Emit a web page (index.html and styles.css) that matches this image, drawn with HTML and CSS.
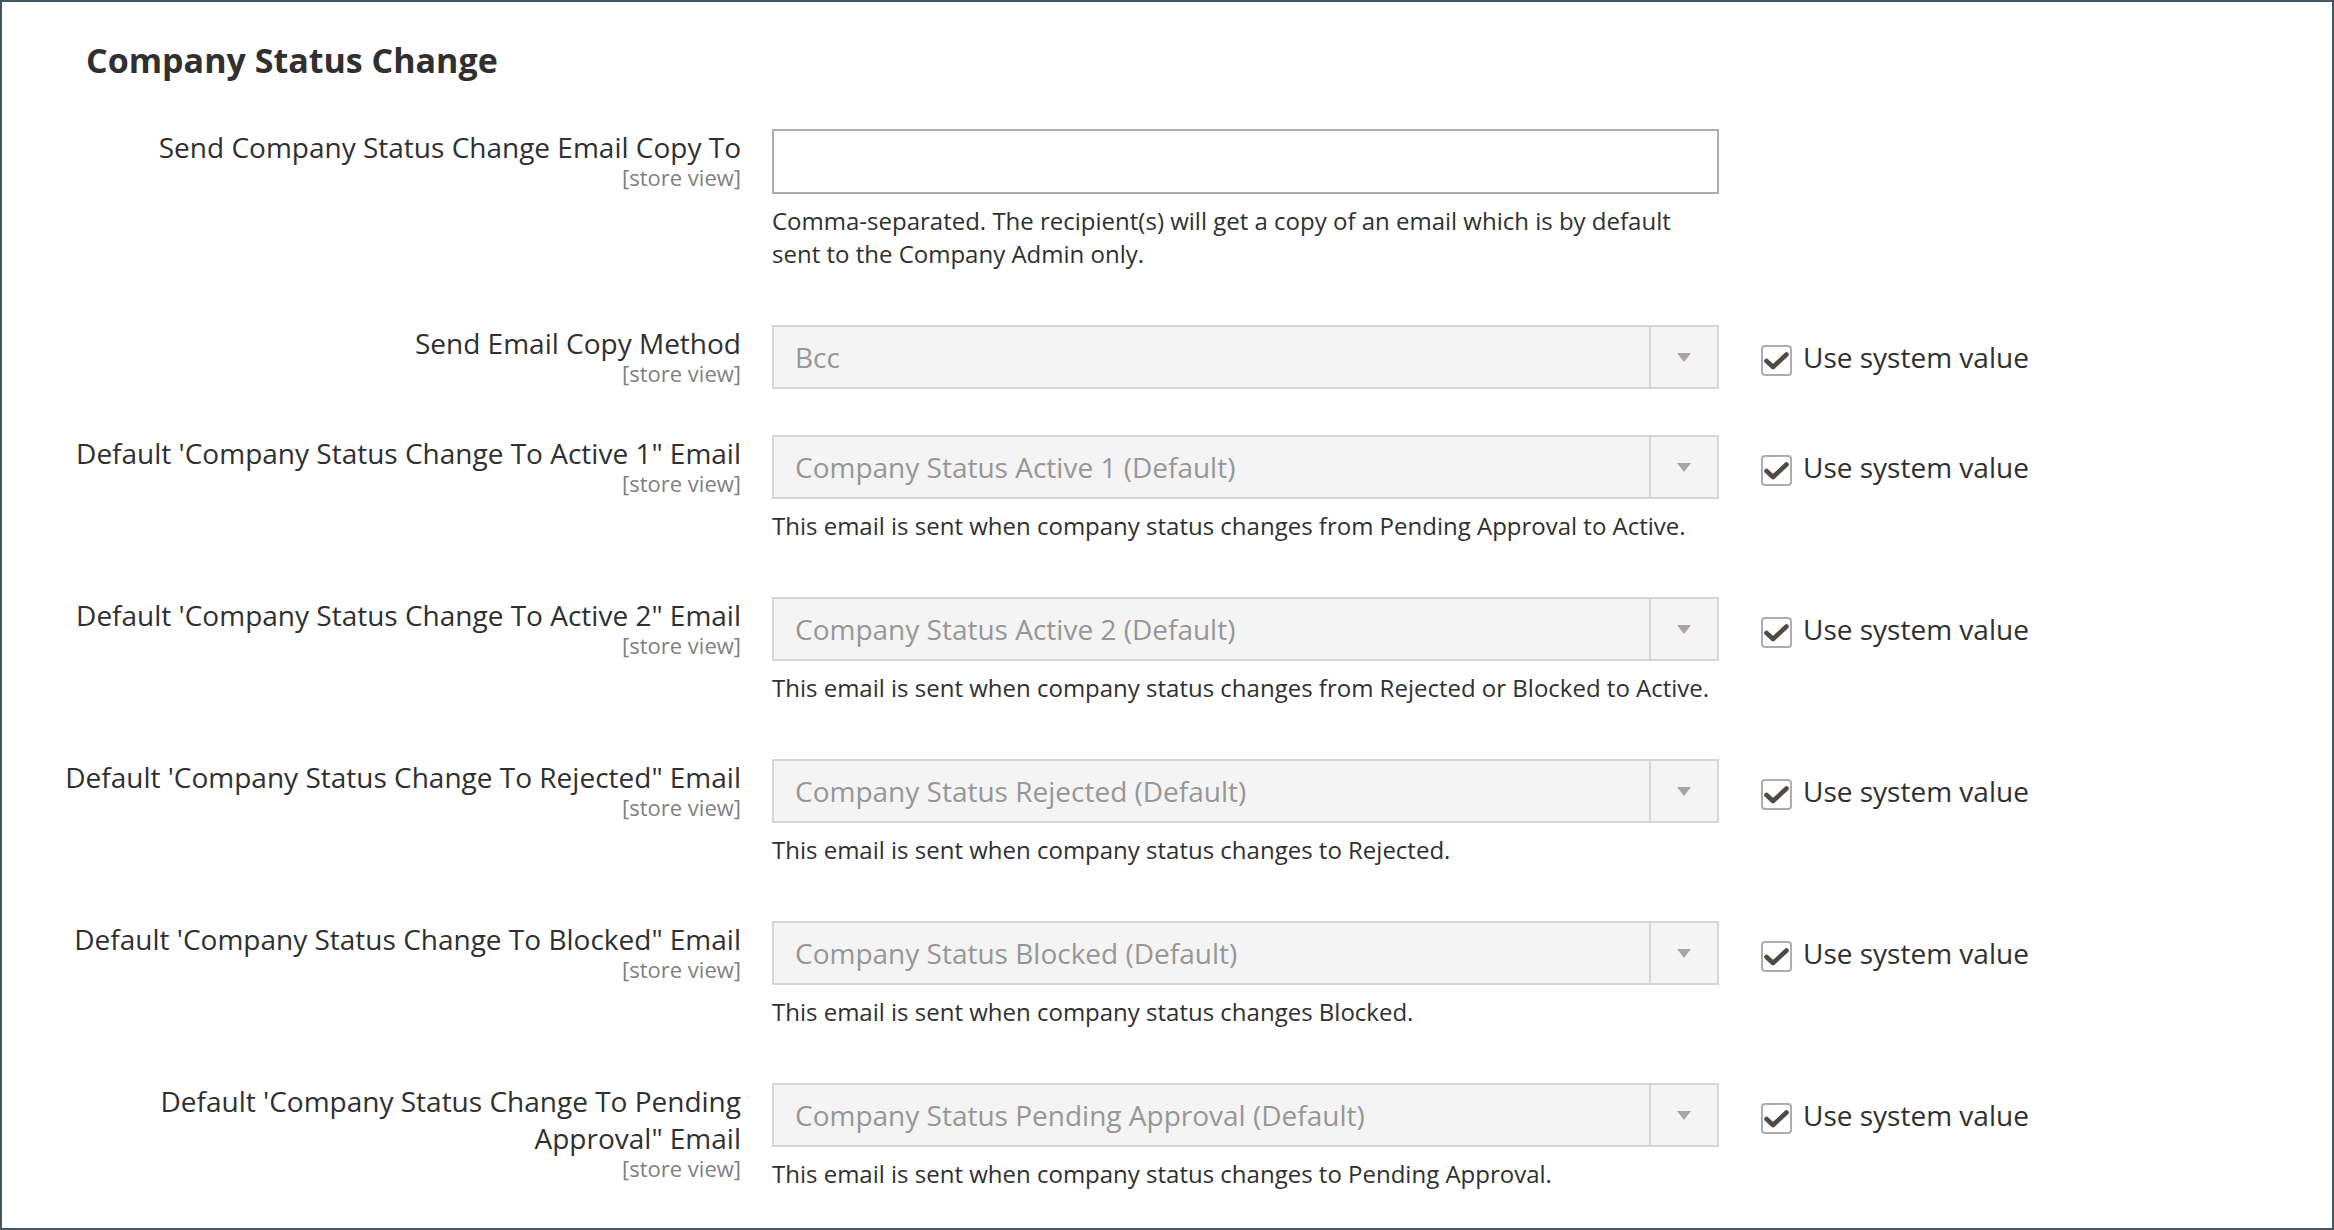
FILE: index.html
```html
<!DOCTYPE html>
<html lang="en">
<head>
<meta charset="utf-8">
<title>Company Status Change</title>
<link rel="stylesheet" href="styles.css">
</head>
<body>
<div class="frame">
  <h2 class="title">Company Status Change</h2>
  <div class="rows">
    <div class="row">
      <div class="label"><span class="label-text">Send Company Status Change Email Copy To</span><span class="scope">[store view]</span></div>
      <div class="control">
        <div class="input"></div>
        <p class="note">Comma-separated. The recipient(s) will get a copy of an email which is by default sent to the Company Admin only.</p>
      </div>
      <div class="extra"></div>
    </div>

    <div class="row row-plain">
      <div class="label"><span class="label-text">Send Email Copy Method</span><span class="scope">[store view]</span></div>
      <div class="control">
        <div class="select"><span class="select-value">Bcc</span><span class="select-btn"><span class="arrow"></span></span></div>
      </div>
      <div class="extra"><span class="checkbox"><svg viewBox="0 0 27 27" width="27" height="27"><polyline points="3.5,14 10,20 23.5,7.5" fill="none" stroke="#514943" stroke-width="4.6" stroke-linecap="round" stroke-linejoin="round"/></svg></span><span class="use-system">Use system value</span></div>
    </div>

    <div class="row">
      <div class="label"><span class="label-text">Default 'Company Status Change To Active 1" Email</span><span class="scope">[store view]</span></div>
      <div class="control">
        <div class="select"><span class="select-value">Company Status Active 1 (Default)</span><span class="select-btn"><span class="arrow"></span></span></div>
        <p class="note">This email is sent when company status changes from Pending Approval to Active.</p>
      </div>
      <div class="extra"><span class="checkbox"><svg viewBox="0 0 27 27" width="27" height="27"><polyline points="3.5,14 10,20 23.5,7.5" fill="none" stroke="#514943" stroke-width="4.6" stroke-linecap="round" stroke-linejoin="round"/></svg></span><span class="use-system">Use system value</span></div>
    </div>

    <div class="row">
      <div class="label"><span class="label-text">Default 'Company Status Change To Active 2" Email</span><span class="scope">[store view]</span></div>
      <div class="control">
        <div class="select"><span class="select-value">Company Status Active 2 (Default)</span><span class="select-btn"><span class="arrow"></span></span></div>
        <p class="note">This email is sent when company status changes from Rejected or Blocked to Active.</p>
      </div>
      <div class="extra"><span class="checkbox"><svg viewBox="0 0 27 27" width="27" height="27"><polyline points="3.5,14 10,20 23.5,7.5" fill="none" stroke="#514943" stroke-width="4.6" stroke-linecap="round" stroke-linejoin="round"/></svg></span><span class="use-system">Use system value</span></div>
    </div>

    <div class="row">
      <div class="label"><span class="label-text">Default 'Company Status Change To Rejected" Email</span><span class="scope">[store view]</span></div>
      <div class="control">
        <div class="select"><span class="select-value">Company Status Rejected (Default)</span><span class="select-btn"><span class="arrow"></span></span></div>
        <p class="note">This email is sent when company status changes to Rejected.</p>
      </div>
      <div class="extra"><span class="checkbox"><svg viewBox="0 0 27 27" width="27" height="27"><polyline points="3.5,14 10,20 23.5,7.5" fill="none" stroke="#514943" stroke-width="4.6" stroke-linecap="round" stroke-linejoin="round"/></svg></span><span class="use-system">Use system value</span></div>
    </div>

    <div class="row">
      <div class="label"><span class="label-text">Default 'Company Status Change To Blocked" Email</span><span class="scope">[store view]</span></div>
      <div class="control">
        <div class="select"><span class="select-value">Company Status Blocked (Default)</span><span class="select-btn"><span class="arrow"></span></span></div>
        <p class="note">This email is sent when company status changes Blocked.</p>
      </div>
      <div class="extra"><span class="checkbox"><svg viewBox="0 0 27 27" width="27" height="27"><polyline points="3.5,14 10,20 23.5,7.5" fill="none" stroke="#514943" stroke-width="4.6" stroke-linecap="round" stroke-linejoin="round"/></svg></span><span class="use-system">Use system value</span></div>
    </div>

    <div class="row">
      <div class="label"><span class="label-text">Default 'Company Status Change To Pending Approval" Email</span><span class="scope">[store view]</span></div>
      <div class="control">
        <div class="select"><span class="select-value">Company Status Pending Approval (Default)</span><span class="select-btn"><span class="arrow"></span></span></div>
        <p class="note">This email is sent when company status changes to Pending Approval.</p>
      </div>
      <div class="extra"><span class="checkbox"><svg viewBox="0 0 27 27" width="27" height="27"><polyline points="3.5,14 10,20 23.5,7.5" fill="none" stroke="#514943" stroke-width="4.6" stroke-linecap="round" stroke-linejoin="round"/></svg></span><span class="use-system">Use system value</span></div>
    </div>
  </div>
</div>
</body>
</html>
```
FILE: styles.css
```css
html, body {
  margin: 0;
  padding: 0;
  background: #ffffff;
}

body {
  font-family: "Open Sans", "Noto Sans", "Liberation Sans", sans-serif;
  color: #303030;
}

.frame {
  box-sizing: border-box;
  width: 2334px;
  height: 1230px;
  border: 2px solid #435661;
  padding-top: 38px;
  overflow: hidden;
}

.title {
  margin: 0 0 0 84px;
  font-size: 34px;
  line-height: 41px;
  font-weight: 700;
  color: #303030;
}

.rows {
  margin-top: 48px;
  padding-left: 34px;
}

.row {
  display: flex;
  align-items: flex-start;
  margin-bottom: 45px;
}

.row-plain {
  margin-bottom: 46px;
}

.label {
  box-sizing: border-box;
  width: 705px;
  flex: none;
  margin-right: 31px;
  padding-top: 0;
  display: flex;
  flex-direction: column;
  align-items: flex-end;
  text-align: right;
}

.label-text {
  font-size: 28px;
  line-height: 37px;
  color: #303030;
}

.scope {
  font-size: 22px;
  line-height: 22px;
  color: #808080;
}

.control {
  width: 947px;
  flex: none;
}

.input {
  box-sizing: border-box;
  height: 65px;
  border: 2px solid #adadad;
  background: #ffffff;
}

.select {
  box-sizing: border-box;
  height: 64px;
  border: 2px solid #d6d6d6;
  background: #f4f4f4;
  display: flex;
  align-items: stretch;
}

.select-value {
  flex: 1;
  padding-left: 21px;
  font-size: 28px;
  line-height: 60px;
  color: #979797;
  white-space: nowrap;
}

.select-btn {
  width: 66px;
  border-left: 2px solid #d6d6d6;
  display: flex;
  align-items: center;
  justify-content: center;
}

.arrow {
  width: 0;
  height: 0;
  border-left: 7px solid transparent;
  border-right: 7px solid transparent;
  border-top: 9px solid #a8a4a1;
}

.note {
  margin: 10px 0 10px 0;
  font-size: 24px;
  line-height: 33px;
  color: #303030;
}

.extra {
  margin-left: 42px;
  height: 64px;
  display: flex;
  align-items: center;
}

.checkbox {
  box-sizing: border-box;
  width: 31px;
  height: 31px;
  margin-top: 6px;
  border: 2px solid #adadad;
  border-radius: 4px;
  background: #ffffff;
  display: flex;
  flex: none;
}

.checkbox svg {
  display: block;
}

.use-system {
  margin-left: 11px;
  font-size: 28px;
  line-height: 37px;
  color: #303030;
  white-space: nowrap;
}
```
